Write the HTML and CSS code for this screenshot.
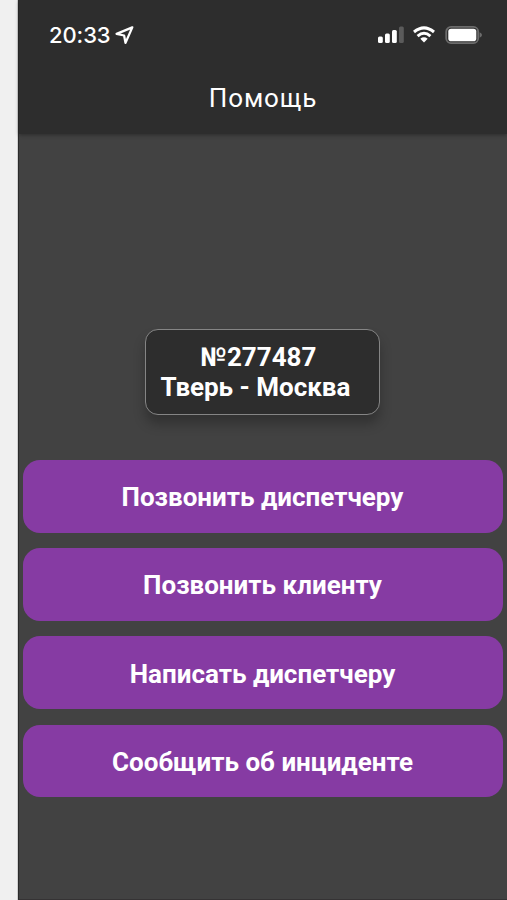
FILE: index.html
```html
<!DOCTYPE html>
<html lang="ru">
<head>
<meta charset="utf-8">
<title>Помощь</title>
<link rel="stylesheet" href="styles.css">
</head>
<body>
<div class="phone">
  <header class="header">
    <div class="status">
      <span class="time">20:33</span>
      <svg class="location" width="20" height="20" viewBox="0 0 20 20"><path d="M17.3 2.4 1.6 8.9 9.1 10.5 10.5 17.9Z" fill="none" stroke="#fff" stroke-width="2.3" stroke-linejoin="round"/></svg>
      <svg class="signal" width="26" height="18" viewBox="0 0 26 18"><g fill="#fff"><rect x="0" y="10.5" width="4.8" height="6.4" rx="1.5"/><rect x="7" y="7.5" width="4.8" height="9.4" rx="1.5"/><rect x="14" y="4" width="4.8" height="12.9" rx="1.5"/><rect x="21" y=".5" width="4.8" height="16.4" rx="1.5" opacity=".22"/></g></svg>
      <svg class="wifi" width="22" height="18" viewBox="0 0 22 18"><g fill="none" stroke="#fff" stroke-width="3"><path d="M1 6Q11-2.3 21 6"/><path d="M4.6 10.1Q11 4.4 17.4 10.1"/></g><path d="M7.3 12.7Q11 9.8 14.7 12.7L11 16.5Z" fill="#fff"/></svg>
      <svg class="battery" width="37" height="18" viewBox="0 0 37 18"><rect x="1.2" y=".9" width="32" height="16.2" rx="4.8" fill="none" stroke="#6c6c6c" stroke-width="1.8"/><rect x="3.3" y="2.8" width="28" height="12.4" rx="2.8" fill="#fff"/><path d="M34.6 6.2Q37 7.2 37 9T34.6 11.8Z" fill="#6c6c6c"/></svg>
    </div>
    <h1 class="title">Помощь</h1>
  </header>
  <main class="content">
    <section class="order">
      <p class="order-text">№277487<br>Тверь - Москва&nbsp;</p>
    </section>
    <div class="actions">
      <button class="action">Позвонить диспетчеру</button>
      <button class="action">Позвонить клиенту</button>
      <button class="action">Написать диспетчеру</button>
      <button class="action">Сообщить об инциденте</button>
    </div>
  </main>
</div>
</body>
</html>
```
FILE: styles.css
```css
* { box-sizing: border-box; }
body {
  margin: 0;
  background: #f0f0f0;
  font-family: Roboto, sans-serif;
  color: #fff;
}
.phone {
  display: flex;
  flex-direction: column;
  height: 900px;
  margin-left: 18px;
  background: #424242;
  border-left: 1px solid #2b2b2b;
  border-bottom: 1px solid #353334;
  box-shadow: -1px 0 0 #cfcfcf;
}
.header {
  height: 134px;
  flex: none;
  background: #2d2d2d;
  box-shadow: 0 1px 4px rgba(0, 0, 0, .35);
}
.status {
  display: flex;
  align-items: center;
  height: 69px;
  padding: 0 25.5px 0 30px;
}
.time {
  width: 62px;
  font: 500 22px/1 Inter, sans-serif;
  letter-spacing: -.1px;
  white-space: nowrap;
}
.location { margin-left: 4px; }
.signal { margin-left: auto; }
.wifi { margin-left: 9.5px; }
.battery { margin-left: 9.5px; }
.title {
  margin: 14px 0 0;
  font-size: 26px;
  font-weight: 400;
  line-height: 30px;
  letter-spacing: .9px;
  text-align: center;
}
.content {
  flex: 1;
  padding: 195px 4.5px 0 3.5px;
}
.order {
  width: 235px;
  height: 86px;
  margin: 0 auto;
  padding: 12px 22.5px 0 14.5px;
  background: #2d2d2d;
  border: 1.5px solid #858585;
  border-radius: 13px;
  box-shadow: 0 9px 12px rgba(0, 0, 0, .25);
}
.order-text {
  margin: 0;
  font-size: 26px;
  font-weight: 700;
  line-height: 30px;
  text-align: center;
  white-space: nowrap;
}
.actions {
  display: grid;
  gap: 15.6px;
  margin-top: 45px;
}
.action {
  height: 72.6px;
  padding: 2px 0 0;
  border: 0;
  border-radius: 17px;
  background: #863ba3;
  color: #fff;
  font: 700 26px/30px Roboto, sans-serif;
}
```
